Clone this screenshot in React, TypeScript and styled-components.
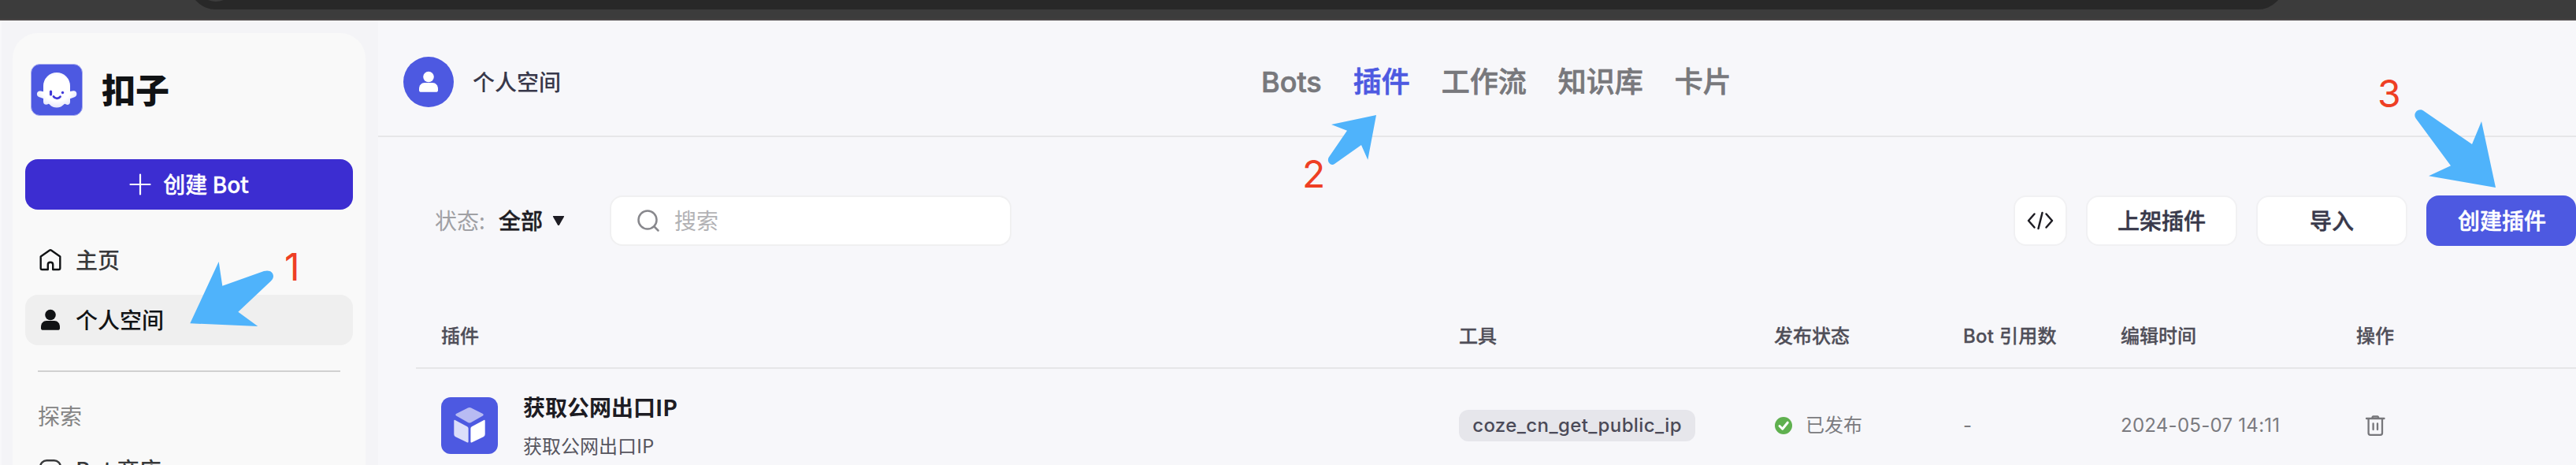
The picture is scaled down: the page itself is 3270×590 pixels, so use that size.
import React from "react";
import styled, { createGlobalStyle } from "styled-components";

const Global = createGlobalStyle`
  * { box-sizing: border-box; }
  body { margin: 0; font-family: Inter, "Noto Sans CJK SC", sans-serif; background: #f7f7fa; overflow: hidden; }
`;

const Page = styled.div`
  position: relative;
  width: 3270px;
  height: 590px;
  overflow: hidden;
  display: flex;
  flex-direction: column;
`;

const BrowserBar = styled.div`
  flex: none;
  height: 26px;
  padding: 0 370px 0 240px;
  background: #3c3c3c;
  border-bottom: 2px solid #4a4646;
`;

const AddressPill = styled.div`
  height: 12px;
  overflow: hidden;
  display: flex;
  align-items: flex-end;
`;

const PillBody = styled.div`
  flex: 1;
  height: 68px;
  border-radius: 34px;
  background: #282828;
  display: flex;
  align-items: flex-end;
  padding: 0 0 10px 10px;
`;

const PillDot = styled.div`
  width: 48px;
  height: 48px;
  border-radius: 50%;
  background: #3c3c3c;
`;

const Shell = styled.div`
  flex: 1;
  min-height: 0;
  display: flex;
`;

const Sidebar = styled.aside`
  flex: none;
  width: 480px;
  padding: 16px 16px 0 14px;
  background: #f4f4f7;
  border-left: 2px solid #f8f8fa;
`;

const SidebarCard = styled.div`
  height: 600px;
  padding: 39px 16px 0;
  border-radius: 32px;
  background: #f9f9f9;
`;

const Brand = styled.div`
  display: flex;
  align-items: center;
  height: 66px;
  padding-left: 7px;
  gap: 24px;
`;

const BrandName = styled.div`
  padding-bottom: 4px;
  font: 900 43px/60px "Noto Sans CJK SC", sans-serif;
  color: #111315;
`;

const Label = styled.span`
  padding-bottom: 3px;
`;

const CreateBot = styled.button`
  display: flex;
  align-items: center;
  justify-content: center;
  width: 416px;
  height: 64px;
  margin: 55px 0 0;
  padding: 0;
  gap: 15px;
  border: 0;
  border-radius: 16px;
  background: #3c2dd1;
  color: #fff;
  font: 500 28px/40px "Noto Sans CJK SC", sans-serif;
  -webkit-text-stroke: 0.3px #fff;
`;

const NavItem = styled.div<{ $active?: boolean; $top: number }>`
  display: flex;
  align-items: center;
  height: 64px;
  margin-top: ${(p) => p.$top}px;
  padding-left: 16px;
  gap: 16px;
  border-radius: 16px;
  background: ${(p) => (p.$active ? "#efefef" : "transparent")};
  color: ${(p) => (p.$active ? "#111315" : "#38393b")};
  font: 500 28px/40px "Noto Sans CJK SC", sans-serif;
`;

const SideDivider = styled.div`
  height: 2px;
  margin: 32px 16px 0;
  background: #d1d1d1;
`;

const SideLabel = styled.div`
  margin: 35px 0 0 16px;
  padding-bottom: 1px;
  font: 400 28px/40px "Noto Sans CJK SC", sans-serif;
  color: #848484;
`;

const Main = styled.main`
  flex: 1;
  min-width: 0;
  background: #f7f7fa;
`;

const Header = styled.header`
  display: flex;
  align-items: center;
  height: 148px;
  padding: 10px 0 0 32px;
  border-bottom: 2px solid #e6e6e8;
`;

const Avatar = styled.div`
  display: flex;
  align-items: center;
  justify-content: center;
  width: 64px;
  height: 64px;
  border-radius: 50%;
  background: #4d59e1;
`;

const SpaceName = styled.div`
  width: 1001px;
  margin-left: 24px;
  padding-bottom: 2px;
  font: 500 28px/40px "Noto Sans CJK SC", sans-serif;
  color: #38384a;
`;

const Tabs = styled.nav`
  display: flex;
  gap: 40px;
`;

const Tab = styled.div<{ $active?: boolean }>`
  font: 500 36px/48px Inter, "Noto Sans CJK SC", sans-serif;
  color: ${(p) => (p.$active ? "#4d59e1" : "#78787c")};
  -webkit-text-stroke: 0.7px currentColor;
  white-space: nowrap;
`;

const Toolbar = styled.div`
  display: flex;
  align-items: center;
  height: 64px;
  margin-top: 74px;
  padding-left: 72px;
`;

const FilterLabel = styled.span`
  width: 81px;
  padding-bottom: 2px;
  font: 400 28px/40px "Noto Sans CJK SC", sans-serif;
  color: #a0a0a4;
`;

const FilterValue = styled.span`
  display: flex;
  align-items: center;
  width: 141px;
  padding-bottom: 2px;
  gap: 12px;
  font: 500 28px/40px "Noto Sans CJK SC", sans-serif;
  -webkit-text-stroke: 0.4px currentColor;
  color: #1d1c23;
`;

const Caret = styled.svg`
  margin-top: 2px;
`;

const Search = styled.div`
  display: flex;
  align-items: center;
  width: 510px;
  height: 64px;
  padding-left: 32px;
  gap: 18px;
  border: 2px solid #f0f0f1;
  border-radius: 16px;
  background: #fff;
  font: 400 28px/40px "Noto Sans CJK SC", sans-serif;
  color: #b2b2b5;
`;

const Actions = styled.div`
  display: flex;
  gap: 24px;
  margin-left: auto;
`;

const Button = styled.button<{ $primary?: boolean; $width: number }>`
  display: flex;
  align-items: center;
  justify-content: center;
  width: ${(p) => p.$width}px;
  height: 64px;
  padding: ${(p) => (p.$primary ? "0 0 0 2px" : "0")};
  border: ${(p) => (p.$primary ? "0" : "2px solid #f1f1f3")};
  border-radius: 16px;
  background: ${(p) => (p.$primary ? "#4d59e1" : "#fff")};
  color: ${(p) => (p.$primary ? "#fff" : "#38384a")};
  font: 500 28px/40px "Noto Sans CJK SC", sans-serif;
  -webkit-text-stroke: 0.5px currentColor;
`;

const Table = styled.div`
  margin: 76px 0 0 48px;
`;

const Row = styled.div<{ $head?: boolean }>`
  display: grid;
  grid-template-columns: 1292px 400px 240px 200px 299px 1fr;
  align-items: center;
  height: ${(p) => (p.$head ? 80 : 146)}px;
  padding-left: 32px;
  border-bottom: 2px solid #e6e6e8;
  font: ${(p) => (p.$head ? 500 : 400)} 24px/32px Inter, "Noto Sans CJK SC", sans-serif;
  color: ${(p) => (p.$head ? "#4f4e58" : "#7b7b80")};
`;

const HeadText = styled.span<{ $spacing?: number }>`
  letter-spacing: ${(p) => p.$spacing ?? 0}px;
  -webkit-text-stroke: 0.3px currentColor;
`;

const Plugin = styled.div`
  display: flex;
  align-items: center;
  gap: 32px;
`;

const PluginIcon = styled.div`
  display: flex;
  width: 72px;
  height: 72px;
  border-radius: 12px;
  overflow: hidden;
`;

const PluginText = styled.div`
  padding-bottom: 4px;
`;

const PluginName = styled.div`
  font: 700 28px/40px "Noto Sans CJK SC", sans-serif;
  color: #1d1c23;
`;

const PluginDesc = styled.div`
  margin-top: 13px;
  font: 400 24px/32px "Noto Sans CJK SC", sans-serif;
  color: #56555e;
`;

const Tag = styled.span`
  display: flex;
  align-items: center;
  justify-content: center;
  width: 300px;
  height: 40px;
  border-radius: 12px;
  background: #e6e6eb;
  color: #4b4a58;
  font: 500 24px/32px Inter, sans-serif;
  letter-spacing: 0.4px;
`;

const Status = styled.span`
  display: flex;
  align-items: center;
  gap: 16px;
`;

const DateText = styled.span`
  letter-spacing: 0.27px;
`;

const RowActions = styled.div`
  display: flex;
  padding-left: 10px;
`;

const Annotations = styled.svg`
  position: absolute;
  inset: 0;
  pointer-events: none;
`;

const StepNumber = styled.div<{ $x: number; $y: number }>`
  position: absolute;
  left: ${(p) => p.$x}px;
  top: ${(p) => p.$y}px;
  font: 400 48px/48px Inter, sans-serif;
  color: #ee3f24;
`;

const PersonIcon = ({ color }: { color: string }) => (
  <svg width="32" height="32" viewBox="0 0 32 32" fill={color}>
    <circle cx="16" cy="9.5" r="6.8" />
    <path d="M4 25c0-5 3-8 7-8h10c4 0 7 3 7 8v1.5c0 1.600-1 2.300-2.500 2.300h-19C5 28.800 4 28.100 4 26.500z" />
  </svg>
);

const GhostLogo = () => (
  <svg width="66" height="66" viewBox="0 0 66 66">
    <defs>
      <radialGradient id="ghost" cx="50%" cy="45%" r="60%">
        <stop offset="60%" stopColor="#fff" />
        <stop offset="100%" stopColor="#dfe0fa" />
      </radialGradient>
    </defs>
    <rect x=".5" y=".5" width="65" height="65" rx="11" fill="#4d59e1" stroke="#a9aef0" />
    <path d="M16 28a17 17 0 0 1 34 0v7l4-.7c5-.8 6 6.500 1.500 8l-5.500 2v4c0 4-4 4.500-6.500 2.500-2 0-3 4.700-10.500 4.700S24.500 51 22.500 50.800C20 52.800 16 52 16 48v-4l-5-1.700C6 40.500 7.500 33.500 12.500 34.500l3.500.7z" fill="url(#ghost)" />
    <path d="M25.500 35v4" stroke="#4038d8" strokeWidth="3.200" strokeLinecap="round" />
    <circle cx="40.500" cy="36.500" r="1.700" fill="#4038d8" />
    <path d="M29 41.500c2 3 6.500 3 8.500.2" stroke="#4038d8" strokeWidth="2.800" strokeLinecap="round" fill="none" />
  </svg>
);

const HomeIcon = () => (
  <svg width="32" height="32" viewBox="0 0 32 32" fill="none" stroke="#111315" strokeWidth="2.400" strokeLinejoin="round">
    <path d="M3.700 11.500v14.700c0 1.100.7 1.800 1.800 1.800h7.300v-6.300c0-4 6.400-4 6.400 0V28h7.300c1.100 0 1.800-.7 1.800-1.800V11.500L16.900 3.500c-.6-.4-1.200-.4-1.800 0z" />
  </svg>
);

const BotIcon = () => (
  <svg width="32" height="32" viewBox="0 0 32 32" fill="none" stroke="#38393b" strokeWidth="2.400">
    <rect x="3.200" y="4.200" width="25.600" height="22" rx="8" />
  </svg>
);

const CubeIcon = () => (
  <svg width="72" height="72" viewBox="0 0 72 72">
    <rect width="72" height="72" fill="#4d59e1" />
    <path d="M34 13.500q2-1 4 0l14.500 7.300q2.500 1.400 0 2.900L38 32q-2 1.200-4 0l-14.500-8.300q-2.500-1.500 0-2.900z" fill="#b8bbf3" />
    <path d="M16.300 30.200q0-2 1.800-1l15 8q1.500.9 1.500 2.500v16.500q0 2-1.800 1l-14.500-7q-2-1-2-3.300z" fill="#dcdefa" />
    <path d="M55.700 30.200q0-2-1.800-1l-15 8q-1.500.9-1.500 2.500v16.500q0 2 1.800 1l14.500-7q2-1 2-3.300z" fill="#fff" />
  </svg>
);

const TrashIcon = () => (
  <svg width="28" height="32" viewBox="0 0 28 32" fill="none" stroke="#77777b" strokeWidth="2.300" strokeLinecap="round" strokeLinejoin="round">
    <path d="M3 7h22.500M10.500 5.500l.8-1.200h6l.8 1.200M5.600 8v17.500c0 1.500.8 2.300 2.300 2.300h12.800c1.500 0 2.300-.8 2.300-2.300V8M11.600 13.500v7.500M17 13.500v7.500" />
  </svg>
);

const CodeIcon = () => (
  <svg width="34" height="24" viewBox="0 0 34 24" fill="none" stroke="#1d1c23" strokeWidth="2.500" strokeLinecap="round" strokeLinejoin="round">
    <path d="M9.500 3.500L2 12l7.500 8.500M24.500 3.500L32 12l-7.500 8.500M19.500 2l-5 20" />
  </svg>
);

const ARROWS = [
  "M241.300 410.300L277.700 332L282.300 362.700L335 344C342 342 347 345 347 350.500C347 353 345.500 355 343.500 357L302.300 395.700L327.300 414Z",
  "M1747 146L1736.300 202.700L1728 184L1694 208C1690 211 1684 206 1686.500 200L1710 165.700L1690 158Z",
  "M3168 238L3150 154L3138 183L3077 141C3072 136 3062 142 3066.500 150L3111 210.300L3083 223.300Z",
];

export default function App() {
  return (
    <Page>
      <Global />
      <BrowserBar>
        <AddressPill>
          <PillBody>
            <PillDot />
          </PillBody>
        </AddressPill>
      </BrowserBar>
      <Shell>
        <Sidebar>
          <SidebarCard>
            <Brand>
              <GhostLogo />
              <BrandName>扣子</BrandName>
            </Brand>
            <CreateBot>
              <svg width="28" height="28" viewBox="0 0 28 28" stroke="#fff" strokeWidth="2.200" strokeLinecap="round">
                <path d="M14 1.500v25M1.500 14h25" />
              </svg>
              <Label>创建 Bot</Label>
            </CreateBot>
            <NavItem $top={32}>
              <HomeIcon />
              <Label>主页</Label>
            </NavItem>
            <NavItem $active $top={12}>
              <PersonIcon color="#111315" />
              <Label>个人空间</Label>
            </NavItem>
            <SideDivider />
            <SideLabel>探索</SideLabel>
            <NavItem $top={16}>
              <BotIcon />
              <Label>Bot 商店</Label>
            </NavItem>
          </SidebarCard>
        </Sidebar>
        <Main>
          <Header>
            <Avatar>
              <PersonIcon color="#fff" />
            </Avatar>
            <SpaceName>个人空间</SpaceName>
            <Tabs>
              <Tab>Bots</Tab>
              <Tab $active>插件</Tab>
              <Tab>工作流</Tab>
              <Tab>知识库</Tab>
              <Tab>卡片</Tab>
            </Tabs>
          </Header>
          <Toolbar>
            <FilterLabel>状态:</FilterLabel>
            <FilterValue>
              全部
              <Caret width="16" height="14" viewBox="0 0 16 14" fill="#1d1c23">
                <path d="M1.500 1h13q1 0 .5 1L9 12.500q-1 1-2 0L1 2q-.5-1 .5-1z" />
              </Caret>
            </FilterValue>
            <Search>
              <svg width="30" height="30" viewBox="0 0 30 30" fill="none" stroke="#88888d" strokeWidth="2.500" strokeLinecap="round">
                <circle cx="14" cy="14" r="11.500" />
                <path d="M22.500 22.500l5 5" />
              </svg>
              <Label>搜索</Label>
            </Search>
            <Actions>
              <Button $width={68}>
                <CodeIcon />
              </Button>
              <Button $width={192}>
                <Label>上架插件</Label>
              </Button>
              <Button $width={192}>
                <Label>导入</Label>
              </Button>
              <Button $primary $width={190}>
                <Label>创建插件</Label>
              </Button>
            </Actions>
          </Toolbar>
          <Table>
            <Row $head>
              <HeadText>插件</HeadText>
              <HeadText>工具</HeadText>
              <HeadText>发布状态</HeadText>
              <HeadText $spacing={0.3}>Bot 引用数</HeadText>
              <HeadText>编辑时间</HeadText>
              <HeadText>操作</HeadText>
            </Row>
            <Row>
              <Plugin>
                <PluginIcon>
                  <CubeIcon />
                </PluginIcon>
                <PluginText>
                  <PluginName>获取公网出口IP</PluginName>
                  <PluginDesc>获取公网出口IP</PluginDesc>
                </PluginText>
              </Plugin>
              <Tag>coze_cn_get_public_ip</Tag>
              <Status>
                <svg width="24" height="24" viewBox="0 0 24 24">
                  <circle cx="12" cy="12" r="11" fill="#5fb04f" />
                  <path d="M7 12.500l3.700 3.700 6.500-8" fill="none" stroke="#fff" strokeWidth="3" strokeLinecap="round" strokeLinejoin="round" />
                </svg>
                已发布
              </Status>
              <span>-</span>
              <DateText>2024-05-07 14:11</DateText>
              <RowActions>
                <TrashIcon />
              </RowActions>
            </Row>
          </Table>
        </Main>
      </Shell>
      <Annotations width="3270" height="590" viewBox="0 0 3270 590" fill="#4fb3fb">
        {ARROWS.map((d) => (
          <path key={d} d={d} />
        ))}
      </Annotations>
      <StepNumber $x={361} $y={315}>1</StepNumber>
      <StepNumber $x={1653} $y={197}>2</StepNumber>
      <StepNumber $x={3018} $y={95}>3</StepNumber>
    </Page>
  );
}
